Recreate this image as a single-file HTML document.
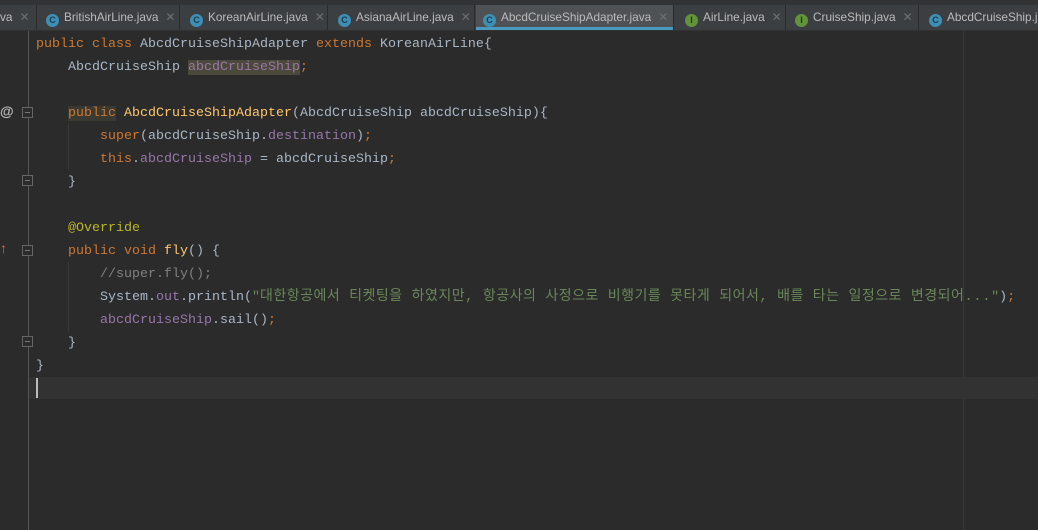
<!DOCTYPE html>
<html><head><meta charset="utf-8"><style>
body{margin:0;width:1038px;height:530px;background:#2b2b2b;overflow:hidden;position:relative;font-family:"Liberation Mono","Noto Sans CJK KR",monospace;}
.tabs{position:absolute;left:0;top:0;width:1038px;height:31px;background:#3c3f41;border-top:5px solid #313335;box-sizing:border-box;border-bottom:1px solid #323232;}
.tab{position:absolute;top:5px;height:25px;font:11.8px "Liberation Sans","Noto Sans CJK KR",sans-serif;color:#bbbbbb;line-height:25px;white-space:nowrap;border-right:1px solid #2b2b2b;overflow:hidden}
.tab .ic{display:inline-block;width:13px;height:13px;border-radius:50%;background:#3d8fb5;color:#1f3b4a;font-size:9px;line-height:13px;text-align:center;vertical-align:-2px;margin-right:5px;font-weight:bold}
.tab .ic.i{background:#62933a;color:#243818}
.tab .x{color:#6d6f71;margin-left:7px}
.active{background:#4e5254;}
.active:after{content:"";position:absolute;left:0;right:0;bottom:0;height:3px;background:#4a9ac0}
.gut{position:absolute;left:28px;top:31px;width:1px;height:499px;background:#555}
.margin{position:absolute;left:963px;top:31px;width:1px;height:499px;background:#393939}
.cur{position:absolute;left:29px;top:377px;width:1009px;height:22px;background:#323232}
.caret{position:absolute;left:36px;top:378px;width:2px;height:20px;background:#bbb}
.code{position:absolute;left:36px;top:33px;font-size:13.33px;line-height:23px;color:#a9b7c6;white-space:pre;}
.k{color:#cc7832}.f{color:#9876aa}.m{color:#ffc66d}.s{color:#6a8759}.c{color:#808080}.a{color:#bbb529}
.h{font-size:14px;letter-spacing:0.5px}
.fold{position:absolute;left:22px;width:11px;height:11px;border:1px solid #666;box-sizing:border-box;background:#2b2b2b}
.fold:after{content:"";position:absolute;left:2px;right:2px;top:4px;height:1px;background:#777}
.ind{position:absolute;width:1px;background:#393939}
</style></head><body>
<div class="tabs"></div>
<div class="tab" style="left:0;width:36px;padding-left:0">va<span class="x">✕</span></div>
<div class="tab" style="left:37px;width:143px;padding-left:9px;box-sizing:border-box"><span class="ic">C</span>BritishAirLine.java<span class="x">✕</span></div>
<div class="tab" style="left:181px;width:147px;padding-left:9px;box-sizing:border-box"><span class="ic">C</span>KoreanAirLine.java<span class="x">✕</span></div>
<div class="tab" style="left:329px;width:146px;padding-left:9px;box-sizing:border-box"><span class="ic">C</span>AsianaAirLine.java<span class="x">✕</span></div>
<div class="tab active" style="left:476px;width:198px;padding-left:7px;box-sizing:border-box"><span class="ic">C</span>AbcdCruiseShipAdapter.java<span class="x">✕</span></div>
<div class="tab" style="left:675px;width:111px;padding-left:10px;box-sizing:border-box"><span class="ic i">I</span>AirLine.java<span class="x">✕</span></div>
<div class="tab" style="left:787px;width:132px;padding-left:8px;box-sizing:border-box"><span class="ic i">I</span>CruiseShip.java<span class="x">✕</span></div>
<div class="tab" style="left:920px;width:130px;padding-left:9px;box-sizing:border-box"><span class="ic">C</span>AbcdCruiseShip.java</div>
<div class="gut"></div><div class="margin"></div>
<div class="cur"></div><div class="caret"></div>
<div class="ind" style="left:68px;top:124px;height:46px"></div>
<div class="ind" style="left:68px;top:262px;height:70px"></div>
<div class="fold" style="top:107px"></div><div class="fold" style="top:175px"></div>
<div class="fold" style="top:245px"></div><div class="fold" style="top:336px"></div>
<div style="position:absolute;left:0;top:103px;color:#bbb;font:bold 14px 'Liberation Sans',sans-serif">@</div>
<div style="position:absolute;left:0;top:240px;color:#e0664a;font:bold 14px 'Liberation Sans',sans-serif">↑</div>
<div class="code"><span class="k">public class </span>AbcdCruiseShipAdapter <span class="k">extends </span>KoreanAirLine{
    AbcdCruiseShip <span class="f" style="background:#4b4a3a">abcdCruiseShip</span><span class="k">;</span>

    <span class="k" style="background:#3b3a32">public</span> <span class="m">AbcdCruiseShipAdapter</span>(AbcdCruiseShip abcdCruiseShip){
        <span class="k">super</span>(abcdCruiseShip.<span class="f">destination</span>)<span class="k">;</span>
        <span class="k">this</span>.<span class="f">abcdCruiseShip </span>= abcdCruiseShip<span class="k">;</span>
    }

    <span class="a">@Override</span>
    <span class="k">public void </span><span class="m">fly</span>() {
        <span class="c">//super.fly();</span>
        System.<span class="f">out</span>.println(<span class="s">"<span class="h">대한항공에서 티켓팅을 하였지만, 항공사의 사정으로 비행기를 못타게 되어서, 배를 타는 일정으로 변경되어...</span>"</span>)<span class="k">;</span>
        <span class="f">abcdCruiseShip</span>.sail()<span class="k">;</span>
    }
}
</div>
</body></html>
